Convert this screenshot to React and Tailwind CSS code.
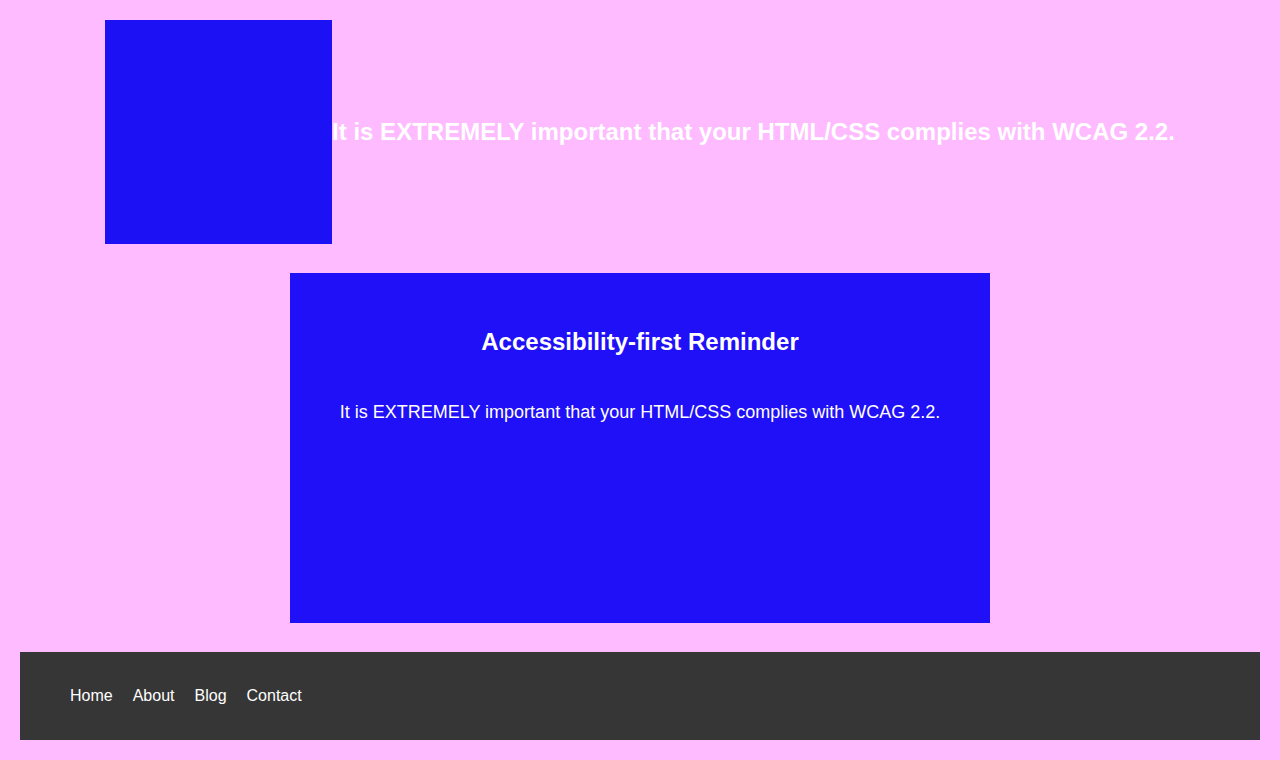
export default function App() {
  return (
    <div className="min-h-[760px] bg-[#ffbbff] p-5 text-white" style={{ fontFamily: '"Liberation Sans", Arial, sans-serif' }}>
      <header className="flex h-[224px] items-center justify-center">
        <div className="h-[224px] w-[227px] shrink-0 bg-[#1c10f5]" aria-hidden="true" />
        <h1 className="text-2xl font-bold">It is EXTREMELY important that your HTML/CSS complies with WCAG 2.2.</h1>
      </header>

      <main className="flex justify-center py-[29px]">
        <section className="h-[350px] w-[700px] bg-[#2010f8] px-[40px] pt-[55px] text-center">
          <h2 className="text-2xl font-bold leading-[28px]">Accessibility-first Reminder</h2>
          <p className="mt-[46px] text-lg leading-[21px]">It is EXTREMELY important that your HTML/CSS complies with WCAG 2.2.</p>
        </section>
      </main>

      <footer className="flex h-[88px] items-center bg-[#363636] px-[50px]">
        <nav>
          <ul className="flex gap-5 text-base">
            <li><a href="#">Home</a></li>
            <li><a href="#">About</a></li>
            <li><a href="#">Blog</a></li>
            <li><a href="#">Contact</a></li>
          </ul>
        </nav>
      </footer>
    </div>
  );
}
